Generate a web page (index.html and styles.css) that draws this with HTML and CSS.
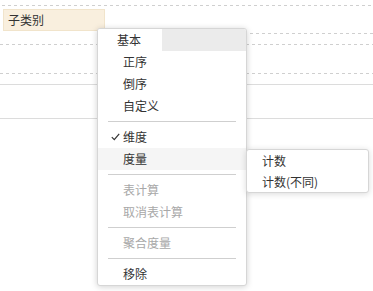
FILE: index.html
```html
<!DOCTYPE html>
<html lang="zh">
<head>
<meta charset="utf-8">
<link rel="stylesheet" href="styles.css">
</head>
<body>
<div class="shelf">
  <div class="dash dash-top"></div>
  <div class="tag-row"><div class="tag">子类别</div></div>
  <div class="dash dash-short"></div>
  <div class="dash dash-b"></div>
  <div class="dash dash-c"></div>
  <div class="solid solid-a"></div>
  <div class="solid solid-b"></div>
</div>

<div class="menu">
  <div class="menu-head"><div class="tab">基本</div><div class="tab-rest"></div></div>
  <div class="item">正序</div>
  <div class="item">倒序</div>
  <div class="item">自定义</div>
  <div class="sep"></div>
  <div class="item checked"><svg class="check" width="9" height="8" viewBox="0 0 9 8"><path d="M0.8 4.2 L3.3 6.7 L8.2 0.8" fill="none" stroke="#333" stroke-width="1.2"/></svg>维度</div>
  <div class="item hover">度量</div>
  <div class="sep"></div>
  <div class="item disabled">表计算</div>
  <div class="item disabled">取消表计算</div>
  <div class="sep"></div>
  <div class="item disabled">聚合度量</div>
  <div class="sep"></div>
  <div class="item">移除</div>
</div>

<div class="submenu">
  <div class="sub-item">计数</div>
  <div class="sub-item">计数(不同)</div>
</div>
</body>
</html>
```

FILE: styles.css
```css
html, body {
  margin: 0;
  padding: 0;
  background: #fff;
  font-family: "Noto Sans CJK SC", "Noto Sans", sans-serif;
  font-size: 12px;
  color: #333;
}

.shelf {
  display: flex;
  flex-direction: column;
  width: 373px;
}

.dash {
  height: 1px;
  background: repeating-linear-gradient(to right, #cfcfcf 0 3px, transparent 3px 6px);
}

.dash-top { margin-top: 5px; margin-left: 2px; }

.tag-row {
  display: flex;
  padding: 3px 0 2px 3px;
}

.tag {
  box-sizing: border-box;
  width: 102px;
  height: 22px;
  background: #f9efde;
  border: 1px solid #f1e4cb;
  padding-left: 4px;
  line-height: 20px;
  color: #333;
}

.dash-short { margin-left: 106px; }
.dash-b { margin-top: 10px; }
.dash-c { margin-top: 28px; }

.solid {
  height: 1px;
  background: #dcdcdc;
}
.solid-a { margin-top: 10px; }
.solid-b { margin-top: 33px; }

.menu {
  position: absolute;
  left: 97px;
  top: 28px;
  width: 150px;
  box-sizing: border-box;
  background: #fff;
  border: 1px solid #d6d6d6;
  border-radius: 3px;
  box-shadow: 0 1px 6px rgba(0, 0, 0, 0.18);
  overflow: hidden;
}

.menu-head {
  display: flex;
  height: 22px;
}
.tab {
  width: 64px;
  padding-left: 19px;
  box-sizing: border-box;
  line-height: 22px;
  background: #fff;
}
.tab-rest {
  flex: 1;
  background: #ebebeb;
}

.item {
  position: relative;
  height: 22px;
  line-height: 22px;
  padding-left: 25px;
  color: #333;
}
.item.hover { background: #f5f5f5; }
.item.disabled { color: #a8a8a8; }

.check {
  position: absolute;
  left: 13px;
  top: 7px;
}

.sep {
  height: 1px;
  margin: 4px 10px;
  background: #cfcfcf;
}

.submenu {
  position: absolute;
  left: 246px;
  top: 149px;
  width: 123px;
  box-sizing: border-box;
  background: #fff;
  border: 1px solid #d6d6d6;
  border-radius: 3px;
  box-shadow: 0 1px 6px rgba(0, 0, 0, 0.15);
}
.sub-item {
  height: 21px;
  line-height: 21px;
  padding-left: 15px;
  color: #333;
}
```
